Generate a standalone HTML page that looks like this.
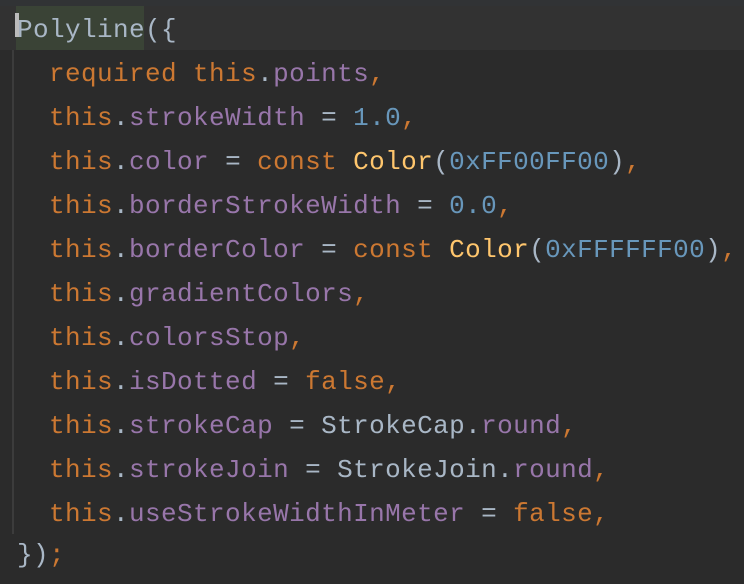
<!DOCTYPE html>
<html><head><style>
body{margin:0;width:744px;height:584px;background:#2b2b2b;overflow:hidden;position:relative;font-family:"Liberation Mono","DejaVu Sans Mono",monospace;font-size:26px;letter-spacing:0.4px;color:#a9b7c6}
.top{position:absolute;left:0;top:0;width:744px;height:6px;background:#313335}
.cur{position:absolute;left:0;top:6px;width:744px;height:44px;background:#323232}
.hl{position:absolute;left:16px;top:6px;width:128px;height:44px;background:#3a4336}
.caret{position:absolute;left:15px;top:13px;width:4px;height:24px;background:#bbb}
.guide{position:absolute;left:12px;top:50px;width:2px;height:484px;background:#3c3c3c}
.l{position:absolute;left:17px;white-space:pre;line-height:44px;height:44px}
.k{color:#cc7832}.p{color:#9876aa}.n{color:#6897bb}.c{color:#ffc66d}
</style></head><body>
<div class="top"></div><div class="cur"></div><div class="hl"></div><div class="guide"></div>
<div class="l" style="top:8px">Polyline({</div>
<div class="l" style="top:52px">  <span class="k">required this</span>.<span class="p">points</span><span class="k">,</span></div>
<div class="l" style="top:96px">  <span class="k">this</span>.<span class="p">strokeWidth</span> = <span class="n">1.0</span><span class="k">,</span></div>
<div class="l" style="top:140px">  <span class="k">this</span>.<span class="p">color</span> = <span class="k">const </span><span class="c">Color</span>(<span class="n">0xFF00FF00</span>)<span class="k">,</span></div>
<div class="l" style="top:184px">  <span class="k">this</span>.<span class="p">borderStrokeWidth</span> = <span class="n">0.0</span><span class="k">,</span></div>
<div class="l" style="top:228px">  <span class="k">this</span>.<span class="p">borderColor</span> = <span class="k">const </span><span class="c">Color</span>(<span class="n">0xFFFFFF00</span>)<span class="k">,</span></div>
<div class="l" style="top:272px">  <span class="k">this</span>.<span class="p">gradientColors</span><span class="k">,</span></div>
<div class="l" style="top:316px">  <span class="k">this</span>.<span class="p">colorsStop</span><span class="k">,</span></div>
<div class="l" style="top:360px">  <span class="k">this</span>.<span class="p">isDotted</span> = <span class="k">false,</span></div>
<div class="l" style="top:404px">  <span class="k">this</span>.<span class="p">strokeCap</span> = StrokeCap.<span class="p">round</span><span class="k">,</span></div>
<div class="l" style="top:448px">  <span class="k">this</span>.<span class="p">strokeJoin</span> = StrokeJoin.<span class="p">round</span><span class="k">,</span></div>
<div class="l" style="top:492px">  <span class="k">this</span>.<span class="p">useStrokeWidthInMeter</span> = <span class="k">false,</span></div>
<div class="l" style="top:533px">})<span class="k">;</span></div>
<div class="caret"></div>
</body></html>
